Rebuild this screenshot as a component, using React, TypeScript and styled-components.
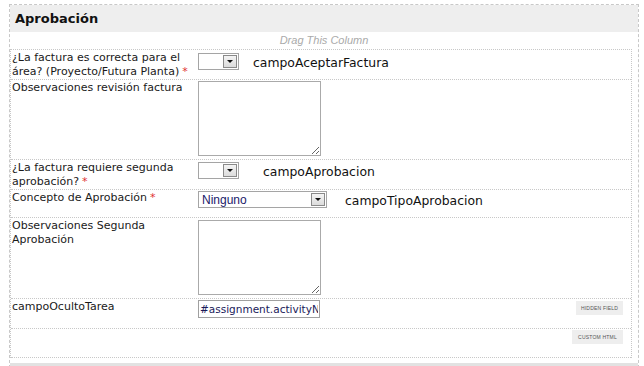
import React from 'react';
import styled, { createGlobalStyle } from 'styled-components';

const GlobalStyle = createGlobalStyle`
  html, body {
    margin: 0;
    padding: 0;
    background: #fff;
  }
  body {
    font-family: "DejaVu Sans", Verdana, sans-serif;
  }
`;

const Page = styled.div`
  padding: 4px 5px 0 9px;
  height: 362px;
  overflow: hidden;
`;

const Section = styled.div`
  border: 1px dashed #c8c8c8;
  border-bottom: none;
  width: 628px;
`;

const Header = styled.div`
  height: 27px;
  background: #eeeeee;
  padding-left: 5px;
  display: flex;
  align-items: center;
  font-family: "DejaVu Sans", Verdana, sans-serif;
  font-weight: bold;
  font-size: 13px;
  color: #111;
`;

const DragHint = styled.div`
  height: 17px;
  line-height: 17px;
  text-align: center;
  font-family: "Liberation Sans", Arial, sans-serif;
  font-style: italic;
  font-size: 11px;
  color: #aaa;
`;

const Column = styled.div`
  margin-right: 6px;
  border-top: 1px dotted #c8c8c8;
  border-right: 1px dotted #c8c8c8;
  border-left: 1px dotted #c8c8c8;
`;

const Row = styled.div<{ $h: number }>`
  display: grid;
  grid-template-columns: 187px 1fr;
  height: ${p => p.$h}px;
  border-bottom: 1px dotted #c8c8c8;
  box-sizing: border-box;
`;

const Label = styled.div`
  padding: 1px 0 0 1px;
  max-width: 184px;
  font-size: 11px;
  line-height: 14px;
  color: #1a1a1a;
`;

const Req = styled.span`
  color: #e03030;
  margin-left: 3px;
`;

const Control = styled.div<{ $top: number }>`
  display: flex;
  align-items: flex-start;
  padding-top: ${p => p.$top}px;
  position: relative;
`;

const Select = styled.div<{ $w: number }>`
  width: ${p => p.$w}px;
  height: 17px;
  box-sizing: border-box;
  border: 1px solid #a5a5a5;
  background: #fff;
  display: flex;
  align-items: center;
  font-family: "Liberation Sans", Arial, sans-serif;
  font-size: 12px;
  color: #1a1a6a;
  padding-left: 3px;
`;

const Arrow = styled.div`
  width: 14px;
  height: 13px;
  margin-left: auto;
  margin-right: 1px;
  box-sizing: border-box;
  border: 1px solid #8a8a8a;
  background: linear-gradient(#f4f4f4, #dcdcdc);
  display: flex;
  align-items: center;
  justify-content: center;
  &::after {
    content: '';
    border-left: 3px solid transparent;
    border-right: 3px solid transparent;
    border-top: 3px solid #111;
  }
`;

const FieldName = styled.span<{ $gap: number }>`
  margin-left: ${p => p.$gap}px;
  font-size: 12.4px;
  line-height: 17px;
  padding-top: 1px;
  color: #111;
`;

const TextArea = styled.textarea`
  width: 123px;
  height: 75px;
  box-sizing: border-box;
  border: 1px solid #aaa;
  margin: 0;
  padding: 0;
  resize: both;
  font: inherit;
`;

const TextInput = styled.input`
  width: 122px;
  height: 18px;
  box-sizing: border-box;
  border: 1px solid #a0a0a0;
  margin: 0;
  padding: 0 1px;
  font-family: "DejaVu Sans", Verdana, sans-serif;
  font-size: 10.5px;
  color: #1a1a5a;
  outline: none;
`;

const Tag = styled.div<{ $w: number; $top: number }>`
  position: absolute;
  right: 8px;
  top: ${p => p.$top}px;
  width: ${p => p.$w}px;
  height: 14px;
  background: #eeeeee;
  font-family: "Liberation Sans", Arial, sans-serif;
  font-size: 5px;
  letter-spacing: 0.2px;
  color: #555;
  display: flex;
  align-items: center;
  justify-content: center;
  text-transform: uppercase;
`;

const BottomBar = styled.div`
  height: 10px;
  margin-top: 5px;
  background: #e2e2e2;
`;

export default function App() {
  return (
    <>
      <GlobalStyle />
      <Page>
        <Section>
          <Header>Aprobación</Header>
          <DragHint>Drag This Column</DragHint>
          <Column>
            <Row $h={30}>
              <Label>
                ¿La factura es correcta para el área? (Proyecto/Futura Planta)
                <Req>*</Req>
              </Label>
              <Control $top={3}>
                <Select $w={41}>
                  <Arrow />
                </Select>
                <FieldName $gap={14}>campoAceptarFactura</FieldName>
              </Control>
            </Row>
            <Row $h={80}>
              <Label>Observaciones revisión factura</Label>
              <Control $top={1}>
                <TextArea />
              </Control>
            </Row>
            <Row $h={30}>
              <Label>
                ¿La factura requiere segunda aprobación?
                <Req>*</Req>
              </Label>
              <Control $top={2}>
                <Select $w={41}>
                  <Arrow />
                </Select>
                <FieldName $gap={24}>campoAprobacion</FieldName>
              </Control>
            </Row>
            <Row $h={28}>
              <Label>
                Concepto de Aprobación
                <Req>*</Req>
              </Label>
              <Control $top={1}>
                <Select $w={129}>
                  Ninguno
                  <Arrow />
                </Select>
                <FieldName $gap={18}>campoTipoAprobacion</FieldName>
              </Control>
            </Row>
            <Row $h={81}>
              <Label>Observaciones Segunda Aprobación</Label>
              <Control $top={2}>
                <TextArea />
              </Control>
            </Row>
            <Row $h={30}>
              <Label>campoOcultoTarea</Label>
              <Control $top={1}>
                <TextInput readOnly value="#assignment.activityName" />
                <Tag $w={47} $top={2}>Hidden Field</Tag>
              </Control>
            </Row>
            <Row $h={29}>
              <Label />
              <Control $top={0}>
                <Tag $w={51} $top={1}>Custom HTML</Tag>
              </Control>
            </Row>
          </Column>
          <BottomBar />
        </Section>
      </Page>
    </>
  );
}
